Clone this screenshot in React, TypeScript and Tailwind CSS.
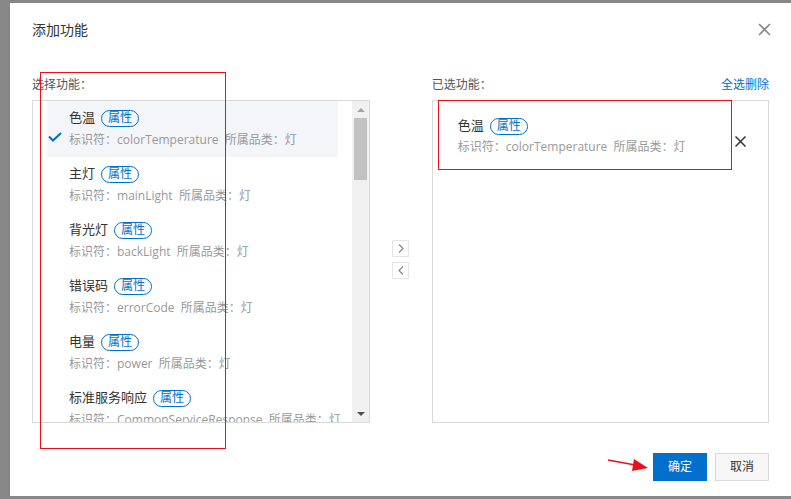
import React from "react";

type Feature = { name: string; id: string };

const features: Feature[] = [
  { name: "色温", id: "colorTemperature" },
  { name: "主灯", id: "mainLight" },
  { name: "背光灯", id: "backLight" },
  { name: "错误码", id: "errorCode" },
  { name: "电量", id: "power" },
  { name: "标准服务响应", id: "CommonServiceResponse" },
];

const font = { fontFamily: '"Open Sans", "Noto Sans CJK SC", sans-serif' };

const Badge = () => (
  <span className="ml-[6px] inline-flex h-[17px] items-center rounded-full border border-[#0070cc] px-[6px] text-[12px] leading-none text-[#0070cc]">
    属性
  </span>
);

const FeatureRow = ({ f, selected }: { f: Feature; selected?: boolean }) => (
  <div
    className={`relative h-[56px] shrink-0 pl-[22px] pt-[8px] ${
      selected ? "bg-[#f4f5f9]" : ""
    }`}
  >
    {selected && (
      <svg
        className="absolute left-[1px] top-[31px]"
        width="14"
        height="10"
        viewBox="0 0 14 10"
      >
        <path d="M1 4.5 L5 8.5 L13 1" fill="none" stroke="#0070cc" strokeWidth="2" />
      </svg>
    )}
    <div className="flex h-[18px] items-center text-[13px] text-[#333]">
      {f.name}
      <Badge />
    </div>
    <div className="mt-[5px] whitespace-nowrap text-[12px] leading-[16px] text-[#999]">
      标识符：{f.id}&nbsp;&nbsp;所属品类：灯
    </div>
  </div>
);

export default function App() {
  return (
    <div className="h-[499px] w-[791px] bg-[#878787] pl-[10px] pt-[3px]" style={font}>
      <div className="relative flex h-[493px] w-[781px] flex-col bg-white px-[22px]">
        {/* header */}
        <div className="flex h-[52px] items-center justify-between">
          <span className="text-[14px] text-[#333]">添加功能</span>
          <svg width="13" height="13" viewBox="0 0 13 13" className="mr-[-2px]">
            <path d="M1 1 L12 12 M12 1 L1 12" stroke="#888" strokeWidth="1.6" />
          </svg>
        </div>

        <div className="flex">
          {/* left */}
          <div className="flex w-[338px] flex-col">
            <div className="flex h-[45px] items-end pb-[7px] text-[12px] leading-[16px] text-[#555]">
              选择功能：
            </div>
            <div className="flex h-[323px] border border-[#d9d9d9]">
              <div className="flex flex-1 flex-col overflow-hidden px-[14px]">
                {features.map((f, i) => (
                  <FeatureRow key={f.id} f={f} selected={i === 0} />
                ))}
              </div>
              <div className="flex w-[17px] flex-col items-center bg-[#f0f0f0]">
                <svg className="mt-[7px]" width="8" height="4" viewBox="0 0 8 4">
                  <path d="M0 4 L4 0 L8 4 Z" fill="#a3a3a3" />
                </svg>
                <div className="mt-[6px] h-[62px] w-[13px] bg-[#c1c1c1]" />
                <div className="flex-1" />
                <svg className="mb-[6px]" width="8" height="4" viewBox="0 0 8 4">
                  <path d="M0 0 L8 0 L4 4 Z" fill="#505050" />
                </svg>
              </div>
            </div>
          </div>

          {/* middle arrows */}
          <div className="flex w-[62px] flex-col items-center pt-[185px]">
            <div className="flex h-[17px] w-[17px] items-center justify-center border border-[#e5e5e5]">
              <svg width="6" height="9" viewBox="0 0 6 9">
                <path d="M1 0.5 L5 4.5 L1 8.5" fill="none" stroke="#888" strokeWidth="1.2" />
              </svg>
            </div>
            <div className="mt-[5px] flex h-[17px] w-[17px] items-center justify-center border border-[#e5e5e5]">
              <svg width="6" height="9" viewBox="0 0 6 9">
                <path d="M5 0.5 L1 4.5 L5 8.5" fill="none" stroke="#888" strokeWidth="1.2" />
              </svg>
            </div>
          </div>

          {/* right */}
          <div className="flex w-[338px] flex-col">
            <div className="flex h-[45px] items-end justify-between pb-[7px] text-[12px] leading-[16px]">
              <span className="text-[#555]">已选功能：</span>
              <span className="text-[#0070cc]">全选删除</span>
            </div>
            <div className="h-[323px] border border-[#d9d9d9]">
              <div className="relative flex h-[68px] items-start pl-[25px] pt-[16px]">
                <div>
                  <div className="flex h-[18px] items-center text-[13px] text-[#333]">
                    色温
                    <Badge />
                  </div>
                  <div className="mt-[4px] whitespace-nowrap text-[12px] leading-[16px] text-[#999]">
                    标识符：colorTemperature&nbsp;&nbsp;所属品类：灯
                  </div>
                </div>
                <svg className="absolute left-[302px] top-[35px]" width="11" height="11" viewBox="0 0 11 11">
                  <path d="M0.5 0.5 L10.5 10.5 M10.5 0.5 L0.5 10.5" stroke="#333" strokeWidth="1.5" />
                </svg>
              </div>
            </div>
          </div>
        </div>

        {/* footer */}
        <div className="mt-[30px] flex justify-end gap-[8px]">
          <button className="h-[28px] w-[54px] bg-[#0070cc] text-[12px] text-white">确定</button>
          <button className="h-[28px] w-[54px] border border-[#d9d9d9] bg-[#f7f7f7] text-[12px] text-[#333]">
            取消
          </button>
        </div>

        {/* annotations */}
        <div className="pointer-events-none absolute left-[30px] top-[69px] h-[377px] w-[186px] border border-[#e8101a]" />
        <div className="pointer-events-none absolute left-[428px] top-[97px] h-[70px] w-[294px] border border-[#e8101a]" />
        <svg className="pointer-events-none absolute left-[596px] top-[452px]" width="44" height="18" viewBox="0 0 44 18">
          <path d="M2 5 L32 10.5" stroke="#e8101a" strokeWidth="1.3" />
          <path d="M28 4 L42 13 L26 16 Z" fill="#e8101a" />
        </svg>
      </div>
    </div>
  );
}
